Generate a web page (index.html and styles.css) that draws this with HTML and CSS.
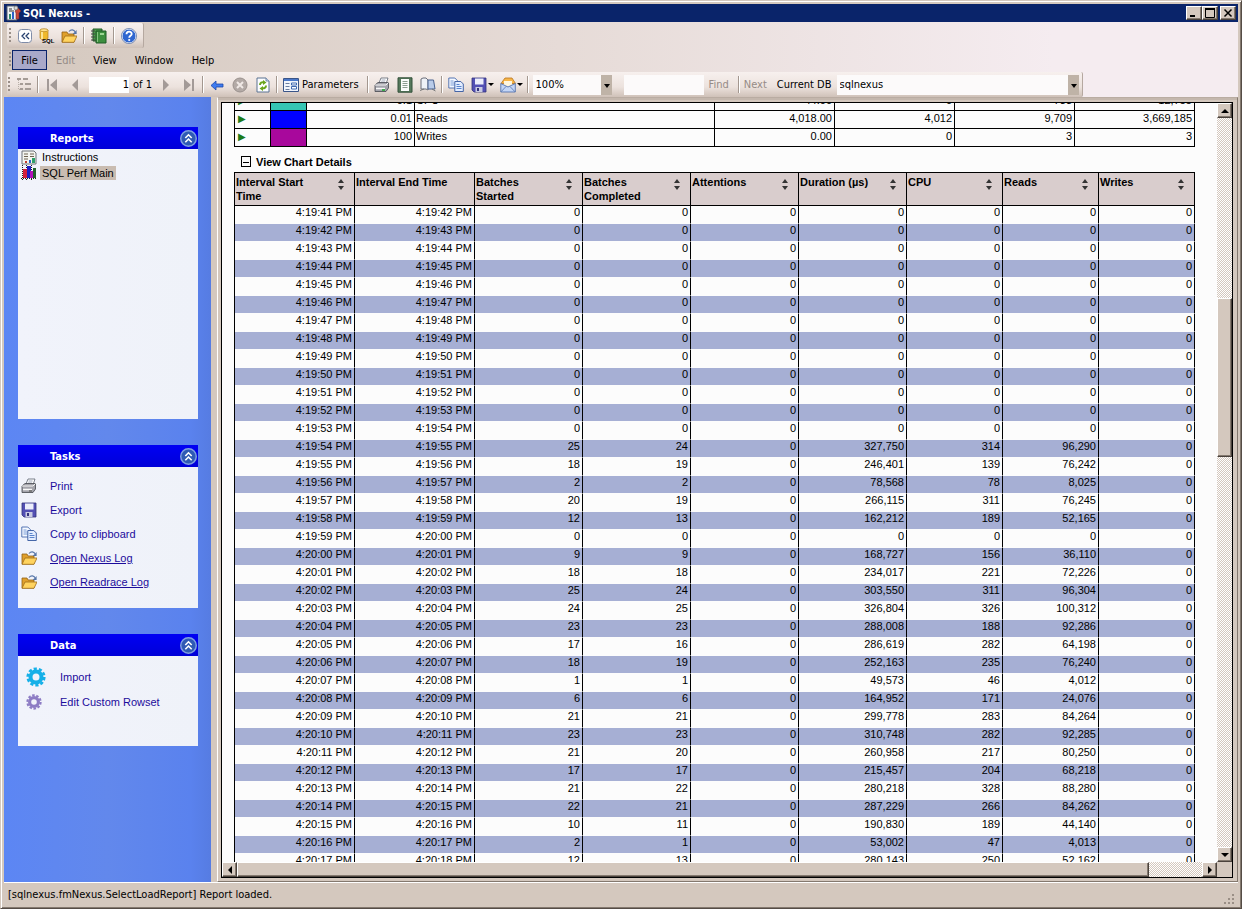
FILE: index.html
```html
<!DOCTYPE html>
<html lang="en">
<head>
  <meta charset="UTF-8" />
  <meta name="viewport" content="width=device-width, initial-scale=1.0"/>
  <title>SQL Nexus -</title>
  <link rel="stylesheet" href="styles.css">
</head>
<body>

  <svg class="sprite" aria-hidden="true">
    <symbol id="i-app" viewBox="0 0 16 16">
      <path d="M1 1h10v14H1z" fill="#eef2f6" stroke="#56606e"/>
      <path d="M3 4h3M3 6h5" stroke="#333"/>
      <path d="M3 9h2v5H3z" fill="#2a8a6a"/><path d="M6 7h2v7H6z" fill="#2c62c8"/>
      <path d="M9 6l3-3 3 3-2 2v6h-3V8z" fill="#c8483c" stroke="#7c2a28" stroke-width=".6"/>
      <circle cx="10" cy="3" r="2" fill="#d8d8d8" stroke="#555" stroke-width=".6"/>
    </symbol>
    <symbol id="i-collapse" viewBox="0 0 16 16">
      <rect x="1.5" y="1.5" width="13" height="13" rx="3" fill="#fff" stroke="#7f8ca8"/>
      <path d="M8 5L5 8l3 3M12 5L9 8l3 3" fill="none" stroke="#26406e" stroke-width="1.3"/>
    </symbol>
    <symbol id="i-sql" viewBox="0 0 18 16">
      <path d="M2 2v8c0 2 8 2 8 0V2z" fill="#f0b92c" stroke="#b5801a" stroke-width=".7"/>
      <path d="M4 3v8" stroke="#fff0b0" stroke-width="1.6"/>
      <ellipse cx="6" cy="2.2" rx="4" ry="1.5" fill="#ffe28a" stroke="#b5801a" stroke-width=".7"/>
      <text x="4" y="15" font-family="Liberation Sans, sans-serif" font-size="6" font-weight="bold">SQL</text>
    </symbol>
    <symbol id="i-folder" viewBox="0 0 16 16">
      <path d="M1 14V4h5l1 2h6v8z" fill="#e0a02c" stroke="#936114" stroke-width=".8"/>
      <path d="M1 14.300l3-6.300h12l-3 6.300z" fill="#ffd35f" stroke="#a06c18" stroke-width=".8"/>
      <path d="M8 3.500c2-2.500 5-2 6 .3" fill="none" stroke="#5575a8" stroke-width="1.2"/>
      <path d="M15.600 2v4h-4z" fill="#5575a8"/>
    </symbol>
    <symbol id="i-book" viewBox="0 0 16 16">
      <path d="M2 1h9v12H2z" fill="#4b9c4a" stroke="#1f5a26"/>
      <path d="M5 3h10v12H5z" fill="#3d8f3f" stroke="#1f5a26"/>
      <path d="M9 5h4v2H9z" fill="#9cd594"/>
      <path d="M0 3h4M0 6h4M0 9h4M0 12h4" stroke="#444"/>
      <path d="M6.500 4v10" stroke="#86c582"/>
    </symbol>
    <symbol id="i-help" viewBox="0 0 16 16">
      <circle cx="8" cy="8" r="7" fill="#2f66d0" stroke="#e8eefa" stroke-width="1"/>
      <circle cx="8" cy="8" r="7.600" fill="none" stroke="#5871a3" stroke-width=".7"/>
      <path d="M5.500 6.300c0-3.500 5.200-3.300 5.200-.4 0 1.900-2.500 1.900-2.500 3.900" fill="none" stroke="#fff" stroke-width="1.8"/>
      <circle cx="8.200" cy="12" r="1.100" fill="#fff"/>
    </symbol>
    <symbol id="i-tree" viewBox="0 0 16 16">
      <path d="M1 2h4M7 2h5M4 7h3M9 7h6M4 12h3M9 12h6" stroke="#a59c96" stroke-width="2"/>
      <path d="M2.500 3v9.500H4M2.500 7.500H4" fill="none" stroke="#b8afa8" stroke-dasharray="1 1"/>
    </symbol>
    <symbol id="i-first" viewBox="0 0 16 16">
      <path d="M3 2h2v12H3zM13 2v12L6 8z" fill="#a39a97"/>
    </symbol>
    <symbol id="i-prev" viewBox="0 0 16 16"><path d="M11 2v12L5 8z" fill="#a39a97"/></symbol>
    <symbol id="i-next" viewBox="0 0 16 16"><path d="M5 2v12l6-6z" fill="#a39a97"/></symbol>
    <symbol id="i-last" viewBox="0 0 16 16">
      <path d="M11 2h2v12h-2zM3 2v12l7-6z" fill="#a39a97"/>
    </symbol>
    <symbol id="i-back" viewBox="0 0 16 16">
      <path d="M2 8.500l5-4.500v3h7v3H7v3z" fill="#3f7cf0" stroke="#1c48a8" stroke-width=".8"/>
    </symbol>
    <symbol id="i-stop" viewBox="0 0 16 16">
      <circle cx="8" cy="8" r="7" fill="#b3aaa6" stroke="#9a918d"/>
      <path d="M5 5l6 6M11 5l-6 6" stroke="#f0e9e6" stroke-width="2"/>
    </symbol>
    <symbol id="i-refresh" viewBox="0 0 16 16">
      <path d="M2 1h9l3 3v11H2z" fill="#fcfdff" stroke="#5b7292"/>
      <path d="M11 1v3h3" fill="#cfdcf0" stroke="#5b7292" stroke-width=".8"/>
      <path d="M5 8c0-2.500 2-3 3.500-2.700M11 8.500c0 2.500-2 3-3.500 2.700" fill="none" stroke="#6aa51c" stroke-width="2"/>
      <path d="M8 3l3.500 2.500L8 8zM8 9l-3.500 2.500L8 14z" fill="#6aa51c"/>
    </symbol>
    <symbol id="i-params" viewBox="0 0 16 16">
      <path d="M.5 1.500h15v13H.5z" fill="#f1f5fc" stroke="#3a5588"/>
      <path d="M1 2h14v2H1z" fill="#4a77c8"/>
      <path d="M2.500 6.500h4M2.500 9.500h4M2.500 12.500h4" stroke="#6a7da0"/>
      <path d="M8.500 6h5v2h-5zM8.500 9.500h5v2.500h-5z" fill="#fff" stroke="#3f68b0"/>
    </symbol>
    <symbol id="i-print" viewBox="0 0 16 16">
      <path d="M5 6l2-5h7l-2 6z" fill="#fff" stroke="#5a6270" stroke-width=".8"/>
      <path d="M7.500 3h4M7 5h4" stroke="#8893a8" stroke-width=".8"/>
      <path d="M1 8l3-2.500h10.500V11L12 14.500H1z" fill="#a4a4ac" stroke="#44464e" stroke-width=".8"/>
      <path d="M1 8h11l2.500-2.500" fill="none" stroke="#f5f5f5" stroke-width="1"/>
      <path d="M2 11.500h9" stroke="#f8f8f8" stroke-width="1.500"/>
      <path d="M8 13h3" stroke="currentColor" stroke-width="1.800"/>
    </symbol>
    <symbol id="i-layout" viewBox="0 0 16 16">
      <path d="M1 .8h14v14.400H1z" fill="#56785c" stroke="#33503a"/>
      <path d="M4 2h8v12H4z" fill="#fbfcfb"/>
      <path d="M5.500 4.500h5M5.500 6.500h5M5.500 8.500h5M5.500 10.500h5" stroke="#7f9284" stroke-width=".9"/>
    </symbol>
    <symbol id="i-pages" viewBox="0 0 16 16">
      <path d="M1 2l2-1h3l2 2v10l-2-1H1z" fill="#eef1f7" stroke="#6b6f7b"/>
      <path d="M8 3h5.500l1.500 9H8z" fill="#b9cbe9" stroke="#49618f"/>
      <path d="M0 13.500l4-1.500M15.500 14L12 12" stroke="#777"/>
    </symbol>
    <symbol id="i-copy" viewBox="0 0 16 16">
      <path d="M.8 1h6l2.500 2.500V11H.8z" fill="#f4f8ff" stroke="#4468ac" stroke-width=".9"/>
      <path d="M2.500 4h3M2.500 6h4M2.500 8h4" stroke="#6c92d2" stroke-width=".9"/>
      <path d="M6.800 4.500h6l2.500 2.500v7.500H6.800z" fill="#e3edff" stroke="#33579e" stroke-width=".9"/>
      <path d="M8.500 7.500h3M8.500 9.500h5M8.500 11.500h5" stroke="#4c79c6" stroke-width=".9"/>
    </symbol>
    <symbol id="i-save" viewBox="0 0 16 16">
      <path d="M1 1h14v14H3l-2-2z" fill="#5350b4" stroke="#34327c" stroke-width=".8"/>
      <path d="M4 1.500h8.500v6H4z" fill="#eceefb"/>
      <path d="M4.500 10h7v5h-7z" fill="#c9cbe2"/><path d="M6 11h2v3H6z" fill="#34327c"/>
    </symbol>
    <symbol id="i-mail" viewBox="0 0 16 16">
      <path d="M1 6.500L5 1h7l3.500 5.500z" fill="#f7b548" stroke="#b8741c" stroke-width=".8"/>
      <path d="M4 4h8v5H4z" fill="#fff6dd"/>
      <path d="M.8 6.500L8 10l7.300-3.500V15H.8z" fill="#c4d6f6" stroke="#5473ae" stroke-width=".9"/>
      <path d="M1 14.800l5-5.300M15 14.800l-5-5.300" stroke="#5473ae" stroke-width=".8"/>
    </symbol>
    <symbol id="i-report" viewBox="0 0 16 16">
      <path d="M1 2h12l2 2v11H1z" fill="#f4f5f0" stroke="#6d7278"/>
      <path d="M3 5h4M9 5h4M3 7.500h4M9 7.500h4M3 10h4" stroke="#6d6250"/>
      <path d="M4 12h2v2H4z" fill="#c43c2c"/><path d="M8 11h2v3H8z" fill="#2b62c8"/><path d="M11 9h3v5h-3z" fill="#2da06a"/>
    </symbol>
    <symbol id="i-chart" viewBox="0 0 16 16">
      <path d="M1.500 0v16M0 13.500h16M5.500 0v16M10.500 0v16" stroke="#222" stroke-dasharray="1 1"/>
      <path d="M2 4h4v9H2z" fill="#d4203c"/><path d="M6 1h4v12H6z" fill="#1c1cc4"/>
      <path d="M9 6h3v7H9z" fill="#b010b8"/><path d="M12 3h3v10h-3z" fill="#20602c"/>
    </symbol>
    <symbol id="i-chevrons" viewBox="0 0 16 16">
      <circle cx="8" cy="8" r="7.300" fill="#2f5ab4" stroke="#7f9fe0" stroke-width="1.400"/>
      <path d="M5 7.500l3-3 3 3M5 11.500l3-3 3 3" fill="none" stroke="#fff" stroke-width="1.500"/>
    </symbol>
    <symbol id="i-gear" viewBox="0 0 20 20">
      <circle cx="10" cy="10" r="5.500" fill="none" stroke="currentColor" stroke-width="4"/>
      <circle cx="10" cy="10" r="8.300" fill="none" stroke="currentColor" stroke-width="2.600" stroke-dasharray="3.200 2.014"/>
    </symbol>
  </svg>

  <div class="window">
    <header class="titlebar">
      <svg class="icon"><use href="#i-app"/></svg>
      <h1>SQL Nexus -</h1>
      <div class="window-buttons">
        <button aria-label="Minimize"><svg viewBox="0 0 10 10"><path d="M1 8h5" stroke="#000" stroke-width="2"/></svg></button>
        <button aria-label="Maximize"><svg viewBox="0 0 10 10"><path d="M.5 1h9v8.500h-9z" fill="none" stroke="#000"/><path d="M0 1h10" stroke="#000" stroke-width="2"/></svg></button>
        <button class="close" aria-label="Close"><svg viewBox="0 0 10 10"><path d="M1.500 1.500l7 7M8.500 1.500l-7 7" stroke="#000" stroke-width="1.500"/></svg></button>
      </div>
    </header>

    <div class="bars">
      <div class="toolbar main-tools">
        <span class="grip"></span>
        <button aria-label="Collapse"><svg class="icon"><use href="#i-collapse"/></svg></button>
        <button aria-label="Connect"><svg class="icon wide"><use href="#i-sql"/></svg></button>
        <button aria-label="Open"><svg class="icon"><use href="#i-folder"/></svg></button>
        <span class="sep"></span>
        <button aria-label="Log"><svg class="icon"><use href="#i-book"/></svg></button>
        <span class="sep"></span>
        <button aria-label="Help"><svg class="icon"><use href="#i-help"/></svg></button>
      </div>

      <nav class="menu">
        <span class="grip"></span>
        <button class="active">File</button>
        <button disabled>Edit</button>
        <button>View</button>
        <button>Window</button>
        <button>Help</button>
      </nav>

      <div class="toolbar report-tools">
        <span class="grip"></span>
        <button aria-label="Document map"><svg class="icon"><use href="#i-tree"/></svg></button>
        <span class="sep"></span>
        <button aria-label="First page"><svg class="icon"><use href="#i-first"/></svg></button>
        <button aria-label="Previous page"><svg class="icon"><use href="#i-prev"/></svg></button>
        <label class="pages"><input type="text" value="1" aria-label="Page"> of 1</label>
        <button aria-label="Next page"><svg class="icon"><use href="#i-next"/></svg></button>
        <button aria-label="Last page"><svg class="icon"><use href="#i-last"/></svg></button>
        <span class="sep"></span>
        <button aria-label="Back"><svg class="icon"><use href="#i-back"/></svg></button>
        <button aria-label="Stop"><svg class="icon"><use href="#i-stop"/></svg></button>
        <button aria-label="Refresh"><svg class="icon"><use href="#i-refresh"/></svg></button>
        <span class="sep"></span>
        <button class="params"><svg class="icon"><use href="#i-params"/></svg>Parameters</button>
        <span class="sep"></span>
        <button aria-label="Print"><svg class="icon green"><use href="#i-print"/></svg></button>
        <button aria-label="Print layout"><svg class="icon"><use href="#i-layout"/></svg></button>
        <button aria-label="Page setup"><svg class="icon"><use href="#i-pages"/></svg></button>
        <span class="sep"></span>
        <button aria-label="Copy"><svg class="icon"><use href="#i-copy"/></svg></button>
        <button class="drop" aria-label="Export"><svg class="icon"><use href="#i-save"/></svg></button>
        <button class="drop" aria-label="Send"><svg class="icon"><use href="#i-mail"/></svg></button>
        <span class="sep"></span>
        <span class="combo zoom"><select aria-label="Zoom"><option>100%</option></select></span>
        <input class="search" type="text" aria-label="Find text">
        <button class="find" disabled>Find</button>
        <span class="sep"></span>
        <button class="find" disabled>Next</button>
        <label class="db-label" for="db">Current DB</label>
        <span class="combo db"><select id="db"><option>sqlnexus</option></select></span>
      </div>
    </div>

    <div class="workspace">
      <aside class="sidebar">
        <section class="panel reports">
          <h2>Reports <button aria-label="Collapse reports"><svg class="icon"><use href="#i-chevrons"/></svg></button></h2>
          <ul>
            <li><svg class="icon"><use href="#i-report"/></svg><span>Instructions</span></li>
            <li class="selected"><svg class="icon"><use href="#i-chart"/></svg><span>SQL Perf Main</span></li>
          </ul>
        </section>
        <section class="panel tasks">
          <h2>Tasks <button aria-label="Collapse tasks"><svg class="icon"><use href="#i-chevrons"/></svg></button></h2>
          <ul>
            <li><svg class="icon"><use href="#i-print"/></svg><a href="#">Print</a></li>
            <li><svg class="icon"><use href="#i-save"/></svg><a href="#">Export</a></li>
            <li><svg class="icon"><use href="#i-copy"/></svg><a href="#">Copy to clipboard</a></li>
            <li><svg class="icon"><use href="#i-folder"/></svg><a class="underlined" href="#">Open Nexus Log</a></li>
            <li><svg class="icon"><use href="#i-folder"/></svg><a class="underlined" href="#">Open Readrace Log</a></li>
          </ul>
        </section>
        <section class="panel data">
          <h2>Data <button aria-label="Collapse data"><svg class="icon"><use href="#i-chevrons"/></svg></button></h2>
          <ul>
            <li><svg class="icon gear"><use href="#i-gear"/></svg><a href="#">Import</a></li>
            <li><svg class="icon gear small"><use href="#i-gear"/></svg><a href="#">Edit Custom Rowset</a></li>
          </ul>
        </section>
      </aside>

      <main class="viewer">
        <div class="report">
          <table class="summary">
            <colgroup>
              <col class="c-mark"><col class="c-mark"><col class="c-scale"><col class="c-name">
              <col class="c-num"><col class="c-num"><col class="c-num"><col class="c-num">
            </colgroup>
            <tbody>
              <tr><td class="mark">&#9654;</td><td class="teal"></td><td>0.1</td><td class="name">CPU</td><td>44.00</td><td>0</td><td>733</td><td>12,755</td></tr>
              <tr><td class="mark">&#9654;</td><td class="blue"></td><td>0.01</td><td class="name">Reads</td><td>4,018.00</td><td>4,012</td><td>9,709</td><td>3,669,185</td></tr>
              <tr><td class="mark">&#9654;</td><td class="purple"></td><td>100</td><td class="name">Writes</td><td>0.00</td><td>0</td><td>3</td><td>3</td></tr>
            </tbody>
          </table>

          <h3><button aria-label="Hide chart details"><svg viewBox="0 0 8 8"><path d="M1 4.500h6" stroke="#000"/></svg></button>View Chart Details</h3>

          <table class="details">
            <colgroup>
              <col class="c-time"><col class="c-time">
              <col class="c-batch"><col class="c-batch"><col class="c-batch"><col class="c-batch">
              <col class="c-io"><col class="c-io"><col class="c-io">
            </colgroup>
            <thead>
              <tr>
                <th class="sort">Interval Start Time</th>
                <th>Interval End Time</th>
                <th class="sort">Batches Started</th>
                <th class="sort">Batches Completed</th>
                <th class="sort">Attentions</th>
                <th class="sort">Duration (µs)</th>
                <th class="sort">CPU</th>
                <th class="sort">Reads</th>
                <th class="sort">Writes</th>
              </tr>
            </thead>
            <tbody id="intervals"></tbody>
          </table>
        </div>

        <div class="scroll vertical">
          <button class="up" aria-label="Scroll up"></button>
          <div class="track"><span class="before"></span><span class="thumb"></span><span class="after"></span></div>
          <button class="down" aria-label="Scroll down"></button>
        </div>
        <div class="scroll horizontal">
          <button class="left" aria-label="Scroll left"></button>
          <div class="track"><span class="thumb"></span><span class="after"></span></div>
          <button class="right" aria-label="Scroll right"></button>
        </div>
        <div class="corner"></div>
      </main>
    </div>

    <footer class="status">
      <span>[sqlnexus.fmNexus.SelectLoadReport] Report loaded.</span>
      <svg class="resize" viewBox="0 0 12 12"><path d="M9 1h2v2H9zM5 5h2v2H5zM9 5h2v2H9zM1 9h2v2H1zM5 9h2v2H5zM9 9h2v2H9z"/></svg>
    </footer>
  </div>

  <script>
    // started, completed, attentions, duration, cpu, reads, writes
    const idle = [0, 0, 0, 0, 0, 0, 0];
    const rows = [
      ...Array(13).fill(idle),
      [25, 24, 0, 327750, 314, 96290, 0],
      [18, 19, 0, 246401, 139, 76242, 0],
      [2, 2, 0, 78568, 78, 8025, 0],
      [20, 19, 0, 266115, 311, 76245, 0],
      [12, 13, 0, 162212, 189, 52165, 0],
      idle,
      [9, 9, 0, 168727, 156, 36110, 0],
      [18, 18, 0, 234017, 221, 72226, 0],
      [25, 24, 0, 303550, 311, 96304, 0],
      [24, 25, 0, 326804, 326, 100312, 0],
      [23, 23, 0, 288008, 188, 92286, 0],
      [17, 16, 0, 286619, 282, 64198, 0],
      [18, 19, 0, 252163, 235, 76240, 0],
      [1, 1, 0, 49573, 46, 4012, 0],
      [6, 6, 0, 164952, 171, 24076, 0],
      [21, 21, 0, 299778, 283, 84264, 0],
      [23, 23, 0, 310748, 282, 92285, 0],
      [21, 20, 0, 260958, 217, 80250, 0],
      [17, 17, 0, 215457, 204, 68218, 0],
      [21, 22, 0, 280218, 328, 88280, 0],
      [22, 21, 0, 287229, 266, 84262, 0],
      [10, 11, 0, 190830, 189, 44140, 0],
      [2, 1, 0, 53002, 47, 4013, 0],
      [12, 13, 0, 280143, 250, 52162, 0]
    ];

    const firstSecond = 19 * 60 + 41;

    function formatTime(seconds) {
      const min = String(Math.floor(seconds / 60)).padStart(2, '0');
      const sec = String(seconds % 60).padStart(2, '0');
      return `4:${min}:${sec} PM`;
    }

    const body = document.getElementById('intervals');
    rows.forEach(function (values, i) {
      const tr = body.insertRow();
      const start = firstSecond + i;
      const cells = [formatTime(start), formatTime(start + 1)];
      values.forEach(v => cells.push(v.toLocaleString('en-US')));
      cells.forEach(text => tr.insertCell().textContent = text);
    });
  </script>

</body>
</html>
```
FILE: styles.css
```css
:root {
  --face: #d4c8be;
  --shadow: #84796f;
  --ui: "DejaVu Sans Condensed", "Liberation Sans", sans-serif;
  --report: "Liberation Sans", Arial, sans-serif;
}

* {
  box-sizing: border-box;
}

body {
  margin: 0;
  font-family: var(--ui);
  font-size: 11px;
  color: #000;
}

button,
input,
select {
  font: inherit;
  color: inherit;
  margin: 0;
  padding: 0;
  border: none;
  border-radius: 0;
  background: none;
}

h1, h2, h3, ul {
  margin: 0;
  padding: 0;
  font-size: 11px;
  list-style: none;
}

.sprite {
  display: none;
}

.icon {
  width: 16px;
  height: 16px;
  display: block;
  flex: none;
  color: #777;
}

.icon.wide {
  width: 18px;
}

.icon.green {
  color: #3a4;
}

.window {
  height: 100vh;
  display: flex;
  flex-direction: column;
  padding: 3px;
  background: var(--face);
  border: 1px solid var(--face);
  border-right-color: #554c46;
  border-bottom-color: #554c46;
  box-shadow: inset 1px 1px #fff, inset -1px -1px var(--shadow);
}

/* title bar */
.titlebar {
  flex: none;
  height: 18px;
  display: flex;
  align-items: center;
  gap: 1px;
  padding: 0 2px;
  background: #0a246a;
  color: #fff;
}

.titlebar h1 {
  flex: 1;
}

.window-buttons {
  display: flex;
}

.window-buttons button,
.scroll button,
.thumb {
  background: var(--face);
  border: 1px solid #fff;
  border-right-color: #4a423c;
  border-bottom-color: #4a423c;
  box-shadow: inset -1px -1px var(--shadow);
}

.window-buttons button {
  width: 16px;
  height: 14px;
  display: grid;
  place-items: center;
}

.window-buttons svg {
  width: 10px;
  height: 10px;
}

.window-buttons .close {
  margin-left: 2px;
}

/* tool bars */
.bars {
  flex: none;
  padding: 1px 0 0 3px;
  background: linear-gradient(90deg, #d4c8be, #e6dbd7 45%, #f5ecf0 85%);
}

.toolbar {
  width: fit-content;
  display: flex;
  align-items: center;
  background: linear-gradient(#f7f0ee, #ece2dd 60%, #cfc1b8);
  border-radius: 2px;
  border-right: 1px solid #b5a8a0;
}

.main-tools {
  height: 25px;
  padding: 0 6px 0 2px;
  gap: 5px;
}

.main-tools .sep {
  margin: 0 1px;
}

.grip {
  width: 3px;
  height: 16px;
  flex: none;
  background: repeating-linear-gradient(#9a8f88 0 2px, transparent 2px 4px);
  background-size: 2px 100%;
  background-repeat: no-repeat;
}

.sep {
  width: 2px;
  height: 17px;
  flex: none;
  border-left: 1px solid #a3978f;
  border-right: 1px solid #fff;
}

.menu {
  display: flex;
  align-items: center;
  height: 24px;
  padding-left: 2px;
}

.menu button {
  height: 20px;
  padding: 0 9px;
}

.menu .active {
  width: 35px;
  padding: 0;
  background: #a9a9c9;
  border: 1px solid #0a246a;
}

button:disabled {
  color: #958b86;
}

.report-tools {
  height: 25px;
  padding: 0 3px 0 1px;
  gap: 5px;
}

.report-tools .grip {
  margin-right: -1px;
}

.report-tools .sep {
  margin: 0 -1px;
}

.report-tools button {
  display: flex;
  align-items: center;
}

.report-tools > button .icon {
  margin: 0 1px;
}

.pages {
  display: flex;
  align-items: center;
  gap: 4px;
}

.pages input {
  width: 40px;
  height: 16px;
  text-align: right;
  background: #fff;
}

.params {
  gap: 2px;
  margin-right: 4px;
}

.drop::after {
  content: "";
  border: 3px solid transparent;
  border-top-color: #000;
  border-bottom: none;
}

.combo {
  position: relative;
  display: flex;
}

.combo select {
  appearance: none;
  width: 100%;
  height: 20px;
  padding-left: 3px;
  background: #fcfafa;
}

.combo::before {
  content: "";
  position: absolute;
  right: 0;
  top: 0;
  width: 11px;
  height: 20px;
  background: #bfb3a7;
  pointer-events: none;
}

.combo::after {
  content: "";
  position: absolute;
  right: 2px;
  top: 9px;
  border: 3px solid transparent;
  border-top: 4px solid #000;
  border-bottom: none;
  pointer-events: none;
}

.zoom {
  width: 79px;
}

.search {
  width: 80px;
  height: 20px;
  margin-left: 7px;
  background: #fcfafa;
}

.find {
  margin-right: 5px;
}

.db {
  width: 242px;
}

/* work area */
.workspace {
  flex: 1;
  min-height: 0;
  display: flex;
}

.sidebar {
  width: 207px;
  flex: none;
  padding: 30px 13px 0 14px;
  background: linear-gradient(90deg, #5c86f4, #6288ec 50%, #5a82ee 90%, #567ce2);
  font-family: var(--report);
}

.panel {
  margin-bottom: 26px;
  background: linear-gradient(90deg, #f1f3fb, #eff2f9);
}

.panel h2 {
  height: 22px;
  display: flex;
  align-items: center;
  justify-content: space-between;
  padding: 0 1px 0 32px;
  background: linear-gradient(#0000f4, #0000d8);
  color: #fff;
  font-family: var(--ui);
}

.panel h2 .icon {
  width: 17px;
  height: 17px;
}

.panel li {
  display: flex;
  align-items: center;
}

.panel a {
  color: #1c0c9c;
  text-decoration: none;
}

.panel .underlined {
  text-decoration: underline;
}

.reports {
  height: 292px;
}

.reports li {
  height: 16px;
  gap: 3px;
  padding-left: 3px;
}

.reports span {
  padding: 1px 2px;
}

.reports .selected span {
  background: #c9bcb1;
}

.tasks {
  height: 163px;
}

.tasks ul {
  padding-top: 7px;
}

.tasks li {
  height: 24px;
  gap: 13px;
  padding-left: 3px;
}

.data {
  height: 112px;
}

.data ul {
  padding-top: 8px;
}

.data li {
  height: 25px;
  gap: 14px;
  padding-left: 8px;
}

.icon.gear {
  width: 20px;
  height: 20px;
  color: #16b0e8;
}

.icon.small {
  width: 16px;
  height: 16px;
  margin-right: 4px;
  color: #8d7cc4;
}

/* report viewer */
.viewer {
  flex: 1;
  min-width: 0;
  display: grid;
  grid-template-columns: 1fr 16px;
  grid-template-rows: 1fr 16px;
  margin-left: 6px;
  padding: 4px 4px 3px 3px;
  border-left: 1px solid #fff;
  border-top: 1px solid #b9aca2;
  border-bottom: 1px solid var(--shadow);
  border-right: 1px solid var(--shadow);
  background: linear-gradient(#000, #000) content-box, var(--face);
  box-shadow: inset 0 2px #c4b7ad;
}

.report {
  overflow: hidden;
  background: #fcfcfc;
  margin: 1px 0 0 1px;
  padding-left: 12px;
  font-family: var(--report);
}

.report table {
  width: 961px;
  table-layout: fixed;
  border-spacing: 0;
  border-left: 1px solid #000;
}

.report td {
  height: 18px;
  padding: 0 2px 4px;
  line-height: 13px;
  text-align: right;
  border-right: 1px solid #000;
  border-bottom: 1px solid #000;
}

.report .summary {
  margin-top: -10px;
}

.report .summary td {
  padding: 1px 2px 3px;
}

.c-mark { width: 36px; }
.c-scale { width: 108px; }
.c-name { width: 300px; }
.c-num { width: 120px; }
.c-time { width: 120px; }
.c-batch { width: 108px; }
.c-io { width: 96px; }

.report .mark {
  text-align: left;
  font-size: 10px;
  font-family: "DejaVu Sans", sans-serif;
  color: #1a7a1a;
}

.report .summary .mark {
  padding-left: 3px;
}

.report .summary .name {
  padding-left: 1px;
  text-align: left;
}

.teal { background: #36c6b4; }
.blue { background: #0000ff; }
.purple { background: #a8089c; }

.report h3 {
  height: 25px;
  display: flex;
  align-items: center;
  gap: 5px;
  padding: 4px 0 0 7px;
}

.report h3 button {
  width: 10px;
  height: 11px;
  border: 1px solid #000;
  display: grid;
  place-items: center;
}

.report h3 svg {
  width: 8px;
  height: 8px;
}

.details th {
  position: relative;
  height: 34px;
  padding: 2px 30px 0 1px;
  line-height: 14px;
  text-align: left;
  vertical-align: top;
  background: #d9cdcd;
  border: solid #000;
  border-width: 1px 1px 1px 0;
}

.details th:not(.sort) {
  padding-right: 0;
}

.details th.sort::before,
.details th.sort::after {
  content: "";
  position: absolute;
  right: 10px;
  border: 3px solid transparent;
}

.details th.sort::before {
  top: 6px;
  border-top: none;
  border-bottom: 4px solid #333;
}

.details th.sort::after {
  top: 13px;
  border-bottom: none;
  border-top: 4px solid #333;
}

.details td {
  border-bottom-color: #fcfcfc;
}

.details tr:nth-child(even) td {
  background: #a6afd4;
}

/* scroll bars */
.scroll {
  display: flex;
}

.vertical {
  flex-direction: column;
  margin: 1px 1px 0 0;
}

.horizontal {
  margin: 0 0 1px 1px;
}

.corner {
  background: var(--face);
  margin: 0 1px 1px 0;
}

.scroll button {
  flex: none;
  width: 15px;
  height: 15px;
  display: grid;
  place-items: center;
}

.scroll button::before {
  content: "";
  border: 4px solid transparent;
}

.scroll .up::before { border-top: none; border-bottom-color: #000; }
.scroll .down::before { border-bottom: none; border-top-color: #000; }
.scroll .left::before { border-left: none; border-right-color: #000; }
.scroll .right::before { border-right: none; border-left-color: #000; }

.track {
  flex: 1;
  display: flex;
  background: repeating-conic-gradient(#fff 0 25%, #d4c8be 0 50%) 0 0 / 2px 2px;
}

.vertical .track {
  flex-direction: column;
}

.vertical .before { flex: 180; }
.vertical .thumb { flex: 157; }
.vertical .after { flex: 390; }
.horizontal .thumb { flex: 911; }
.horizontal .after { flex: 53; }

/* status bar */
.status {
  flex: none;
  height: 23px;
  display: flex;
  align-items: center;
  justify-content: space-between;
  padding: 0 3px 0 4px;
  border-top: 1px solid #fff;
}

.resize {
  width: 12px;
  height: 12px;
  align-self: flex-end;
  fill: #9a8f86;
}
```
